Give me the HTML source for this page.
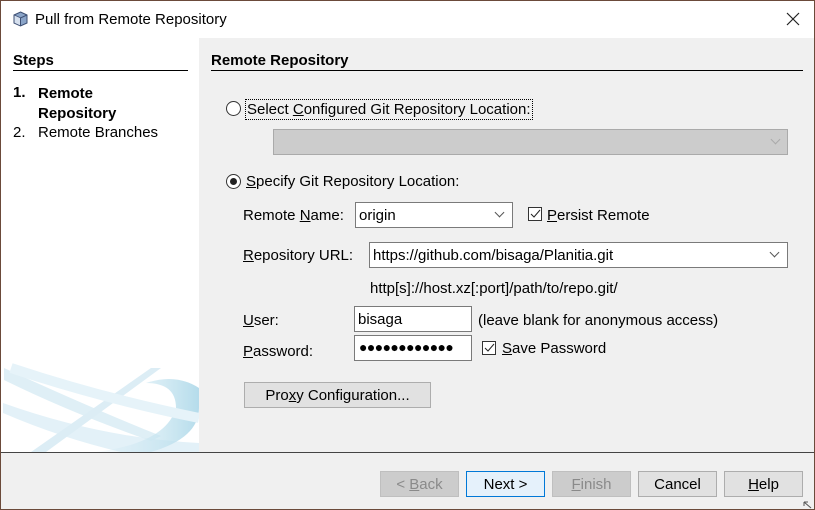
<!DOCTYPE html>
<html><head><style>
*{margin:0;padding:0;box-sizing:border-box}
body{width:815px;height:510px;background:#fff;font-family:"Liberation Sans",sans-serif;font-size:15px;color:#000;position:relative;overflow:hidden}
.a{position:absolute;white-space:nowrap}
.t{margin-top:1px}
#win{position:absolute;left:0;top:0;width:815px;height:510px;border:1px solid #6b4a3a;z-index:5;pointer-events:none}
.box{position:absolute;background:#fff;border:1px solid #7a7a7a}
.btn{position:absolute;height:26px;border:1px solid #adadad;background:#e1e1e1;text-align:center;line-height:25px}
.dis{color:#8a8a8a;background:#cccccc;border-color:#bfbfbf}
.chev{position:absolute;right:6px;top:6px;width:7px;height:7px;border-right:1px solid #555;border-bottom:1px solid #555;transform:rotate(45deg)}
.radio{position:absolute;width:15px;height:15px;border:1px solid #333;border-radius:50%;background:#fff}
.cb{position:absolute;width:14px;height:14px;border:1px solid #333;background:#fff}
u{text-decoration:underline}
</style></head><body>
<div id="win"></div>
<svg class="a" style="left:13px;top:11px" width="15" height="16" viewBox="0 0 15 16"><path d="M7.5 1 L14 4 L14 12 L7.5 15 L1 12 L1 4Z" fill="#8aa4c8" stroke="#3d4f73"/><path d="M1 4 L7.5 7 L14 4 M7.5 7 L7.5 15" stroke="#3d4f73" fill="none"/><path d="M1.5 4.5 L7 7 L7 14.3 L1.5 11.8Z" fill="#d6e0ee"/></svg>
<div class="a" style="left:35px;top:11px;font-size:15px">Pull from Remote Repository</div>
<svg class="a" style="left:786px;top:12px" width="14" height="14"><path d="M1 1L13 13M13 1L1 13" stroke="#222" stroke-width="1.2"/></svg>
<div class="a" style="left:1px;top:38px;width:198px;height:414px;background:#fff;overflow:hidden">
<svg width="198" height="414" style="position:absolute;left:0;top:0">
<defs><linearGradient id="g" x1="0" x2="1"><stop offset="0" stop-color="#dbeef6" stop-opacity=".2"/><stop offset="1" stop-color="#b5dceb"/></linearGradient></defs>
<path d="M2 365 Q100 400 198 405 L198 414 L120 414 Q60 400 2 375Z" fill="#e3f1f8"/>
<path d="M3 330 Q90 370 160 398 L150 403 Q70 375 3 342Z" fill="#d7ebf4" opacity=".8"/>
<path d="M45 414 L160 330 L150 330 L30 414Z" fill="#dcedf5"/>
<path d="M145 345 Q175 345 175 370 Q165 405 95 414 L150 414 Q198 400 198 370 L198 350 Q175 335 145 345Z" fill="url(#g)"/>
<path d="M10 330 Q100 360 198 380" stroke="#e6f3f9" stroke-width="10" fill="none"/>
</svg>
</div>
<div class="a" style="left:13px;top:52px;font-weight:bold">Steps</div>
<div class="a" style="left:13px;top:70px;width:175px;height:1px;background:#000"></div>
<div class="a" style="left:13px;top:84px;font-weight:bold">1.</div>
<div class="a" style="left:38px;top:84px;font-weight:bold;line-height:20px">Remote<br>Repository</div>
<div class="a" style="left:13px;top:124px">2.</div>
<div class="a" style="left:38px;top:124px">Remote Branches</div>
<div class="a" style="left:199px;top:38px;width:615px;height:414px;background:#f0f0f0"></div>
<div class="a" style="left:211px;top:52px;font-weight:bold">Remote Repository</div>
<div class="a" style="left:211px;top:70px;width:592px;height:1px;background:#000"></div>
<div class="radio" style="left:226px;top:101px"></div>
<div class="a" style="left:245px;top:99px;border:1px dotted #000;padding:0 1px;line-height:19px">Select <u>C</u>onfigured Git Repository Location:</div>
<div class="box" style="left:273px;top:129px;width:515px;height:26px;background:#cccccc;border-color:#aaa"><div class="chev" style="border-color:#aaa;right:8px"></div></div>
<div class="radio" style="left:226px;top:174px"><div style="position:absolute;left:3px;top:3px;width:7px;height:7px;border-radius:50%;background:#222"></div></div>
<div class="a" style="left:246px;top:173px"><u>S</u>pecify Git Repository Location:</div>
<div class="a" style="left:243px;top:207px">Remote <u>N</u>ame:</div>
<div class="box" style="left:355px;top:202px;width:158px;height:26px"><span class="a" style="left:3px;top:4px">origin</span><div class="chev" style="top:6px;right:9px"></div></div>
<div class="cb" style="left:528px;top:207px"><svg width="12" height="12" style="position:absolute;left:0;top:0"><path d="M2 6L5 9L11 2" stroke="#222" fill="none"/></svg></div>
<div class="a" style="left:547px;top:207px"><u>P</u>ersist Remote</div>
<div class="a" style="left:243px;top:247px"><u>R</u>epository URL:</div>
<div class="box" style="left:369px;top:242px;width:419px;height:26px"><span class="a" style="left:3px;top:4px">https://github.com/bisaga/Planitia.git</span><div class="chev" style="right:9px"></div></div>
<div class="a" style="left:370px;top:280px">http[s]://host.xz[:port]/path/to/repo.git/</div>
<div class="a" style="left:243px;top:312px"><u>U</u>ser:</div>
<div class="box" style="left:354px;top:306px;width:118px;height:26px"><span class="a" style="left:3px;top:4px">bisaga</span></div>
<div class="a" style="left:478px;top:312px">(leave blank for anonymous access)</div>
<div class="a" style="left:243px;top:343px"><u>P</u>assword:</div>
<div class="box" style="left:354px;top:335px;width:118px;height:26px"><span class="a" style="left:4px;top:3px;font-size:14px;letter-spacing:-0.6px">●●●●●●●●●●●●</span></div>
<div class="cb" style="left:482px;top:341px"><svg width="12" height="12" style="position:absolute;left:0;top:0"><path d="M2 6L5 9L11 2" stroke="#222" fill="none"/></svg></div>
<div class="a" style="left:502px;top:340px"><u>S</u>ave Password</div>
<div class="btn" style="left:244px;top:382px;width:187px">Pro<u>x</u>y Configuration...</div>
<div class="a" style="left:1px;top:452px;width:813px;height:1px;background:#444"></div>
<div class="a" style="left:1px;top:453px;width:813px;height:56px;background:#f0f0f0"></div>
<div class="btn dis" style="left:380px;top:471px;width:79px">&lt; <u>B</u>ack</div>
<div class="btn" style="left:466px;top:471px;width:79px;border:1px solid #0078d7;background:#e5f1fb">Next &gt;</div>
<div class="btn dis" style="left:552px;top:471px;width:79px"><u>F</u>inish</div>
<div class="btn" style="left:638px;top:471px;width:79px">Cancel</div>
<div class="btn" style="left:724px;top:471px;width:79px"><u>H</u>elp</div>
<svg class="a" style="left:803px;top:501px" width="10" height="8"><path d="M1 1L8 7M1 1h4M1 1v4" stroke="#555" fill="none"/></svg>
</body></html>
